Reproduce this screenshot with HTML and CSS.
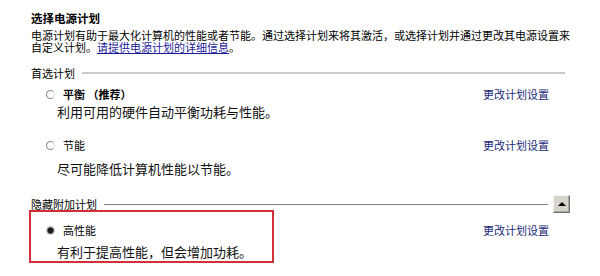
FILE: index.html
```html
<!DOCTYPE html>
<html lang="zh-CN">
<head>
<meta charset="utf-8">
<title>选择电源计划</title>
<link rel="stylesheet" href="styles.css">
</head>
<body>
<div class="page">
  <h1 class="title">选择电源计划</h1>
  <p class="intro">电源计划有助于最大化计算机的性能或者节能。通过选择计划来将其激活，或选择计划并通过更改其电源设置来<br>自定义计划。<a class="intro-link" href="#">请提供电源计划的详细信息</a>。</p>

  <section class="group group-first">
    <div class="group-head">
      <span class="group-label">首选计划</span>
      <span class="rule rule-light"></span>
    </div>
    <div class="plan">
      <div class="plan-row">
        <span class="radio"></span>
        <span class="plan-name plan-name-bold">平衡 （推荐）</span>
        <a class="plan-link" href="#">更改计划设置</a>
      </div>
      <div class="plan-desc">利用可用的硬件自动平衡功耗与性能。</div>
    </div>
    <div class="plan plan-second">
      <div class="plan-row">
        <span class="radio"></span>
        <span class="plan-name">节能</span>
        <a class="plan-link" href="#">更改计划设置</a>
      </div>
      <div class="plan-desc">尽可能降低计算机性能以节能。</div>
    </div>
  </section>

  <section class="group group-hidden">
    <div class="group-head">
      <span class="group-label">隐藏附加计划</span>
      <span class="rule rule-dark"></span>
      <button class="collapse-btn" type="button" aria-label="折叠"><span class="tri"></span></button>
    </div>
    <div class="plan plan-third">
      <div class="plan-row">
        <span class="radio radio-checked"></span>
        <span class="plan-name">高性能</span>
        <a class="plan-link" href="#">更改计划设置</a>
      </div>
      <div class="plan-desc">有利于提高性能，但会增加功耗。</div>
    </div>
    <div class="highlight"></div>
  </section>
</div>
</body>
</html>
```
FILE: styles.css
```css
* { box-sizing: border-box; }
html, body { margin: 0; padding: 0; background: #ffffff; }
body {
  font-family: "Noto Sans CJK SC", "Noto Sans", sans-serif;
  color: #000;
  width: 600px;
  height: 276px;
  overflow: hidden;
}
.page {
  width: 570px;
  padding: 11px 0 0 31px;
}
.title {
  margin: 0;
  font-size: 11.5px;
  line-height: 14px;
  font-weight: bold;
}
.intro {
  margin: 5px 0 0 0;
  font-family: "Liberation Sans", "Noto Sans CJK SC", sans-serif;
  font-size: 11px;
  line-height: 12px;
  width: 539px;
  white-space: nowrap;
}
.intro-link {
  color: #1a1a9c;
  text-decoration: underline;
}
.group { position: relative; }
.group-first { margin-top: 12px; }
.group-head {
  display: flex;
  align-items: center;
  height: 14px;
  font-size: 11px;
}
.group-label { white-space: nowrap; }
.rule { flex: 1; margin-left: 7px; }
.rule-light { height: 2px; background: #cacaca; margin-right: 5px; }
.rule-dark { height: 1px; background: #808080; margin-right: 5px; }
.plan { padding-left: 15px; padding-right: 21px; }
.plan-row {
  display: flex;
  align-items: center;
  height: 14px;
  font-size: 11px;
  margin-top: 7px;
}
.plan-name { margin-left: 8px; }
.plan-name-bold { font-weight: bold; }
.plan-link {
  margin-left: auto;
  color: #1c2a78;
  text-decoration: none;
}
.plan-desc {
  font-size: 13px;
  line-height: 18px;
  margin-top: 2px;
  padding-left: 11px;
  color: #111;
}
.plan-second .plan-row { margin-top: 17px; }
.plan-second .plan-desc { margin-top: 8px; }
.group-hidden { margin-top: 19px; }
.plan-third .plan-row { margin-top: 12px; }
.plan-third .plan-desc { margin-top: 6px; }
.radio {
  width: 9px;
  height: 9px;
  border-radius: 50%;
  border: 1px solid #8a8a8a;
  border-right-color: #dadada;
  background: #fff;
  flex: none;
}
.radio-checked {
  border: 1px solid #b8b8b8;
  background: radial-gradient(circle, #1a1a1a 0 2.6px, #6a6a6a 3.2px, #fff 4px);
}
.collapse-btn {
  width: 17px;
  height: 18px;
  padding: 0;
  margin: 0;
  background: #d6d3cc;
  border: 1px solid;
  border-color: #f4f4f4 #707070 #707070 #f4f4f4;
  box-shadow: inset -1px -1px 0 #a8a59e;
  display: flex;
  align-items: center;
  justify-content: center;
  flex: none;
  margin-top: -1px;
}
.tri {
  width: 0;
  height: 0;
  border-left: 4px solid transparent;
  border-right: 4px solid transparent;
  border-bottom: 4px solid #000;
}
.highlight {
  position: absolute;
  left: -2px;
  top: 13px;
  width: 245px;
  height: 53px;
  border: 2px solid #d0303a;
  pointer-events: none;
}
```
